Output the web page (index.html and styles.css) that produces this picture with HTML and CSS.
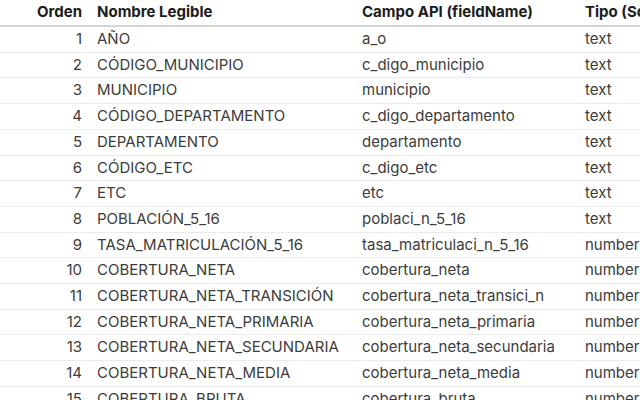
FILE: index.html
```html
<!DOCTYPE html>
<html lang="es">
<head>
<meta charset="utf-8">
<title>Campos</title>
<link rel="stylesheet" href="styles.css">
</head>
<body>
<table class="fields">
  <colgroup>
    <col class="c-order">
    <col class="c-name">
    <col class="c-api">
    <col class="c-type">
  </colgroup>
  <thead>
    <tr><th class="num">Orden</th><th>Nombre Legible</th><th>Campo API (fieldName)</th><th>Tipo (Socrata)</th></tr>
  </thead>
  <tbody>
    <tr><td class="num">1</td><td>AÑO</td><td>a_o</td><td>text</td></tr>
    <tr><td class="num">2</td><td>CÓDIGO_MUNICIPIO</td><td>c_digo_municipio</td><td>text</td></tr>
    <tr><td class="num">3</td><td>MUNICIPIO</td><td>municipio</td><td>text</td></tr>
    <tr><td class="num">4</td><td>CÓDIGO_DEPARTAMENTO</td><td>c_digo_departamento</td><td>text</td></tr>
    <tr><td class="num">5</td><td>DEPARTAMENTO</td><td>departamento</td><td>text</td></tr>
    <tr><td class="num">6</td><td>CÓDIGO_ETC</td><td>c_digo_etc</td><td>text</td></tr>
    <tr><td class="num">7</td><td>ETC</td><td>etc</td><td>text</td></tr>
    <tr><td class="num">8</td><td>POBLACIÓN_5_16</td><td>poblaci_n_5_16</td><td>text</td></tr>
    <tr><td class="num">9</td><td>TASA_MATRICULACIÓN_5_16</td><td>tasa_matriculaci_n_5_16</td><td>number</td></tr>
    <tr><td class="num">10</td><td>COBERTURA_NETA</td><td>cobertura_neta</td><td>number</td></tr>
    <tr><td class="num">11</td><td>COBERTURA_NETA_TRANSICIÓN</td><td>cobertura_neta_transici_n</td><td>number</td></tr>
    <tr><td class="num">12</td><td>COBERTURA_NETA_PRIMARIA</td><td>cobertura_neta_primaria</td><td>number</td></tr>
    <tr><td class="num">13</td><td>COBERTURA_NETA_SECUNDARIA</td><td>cobertura_neta_secundaria</td><td>number</td></tr>
    <tr><td class="num">14</td><td>COBERTURA_NETA_MEDIA</td><td>cobertura_neta_media</td><td>number</td></tr>
    <tr><td class="num">15</td><td>COBERTURA_BRUTA</td><td>cobertura_bruta</td><td>number</td></tr>
  </tbody>
</table>
</body>
</html>
```
FILE: styles.css
```css
html, body {
  margin: 0;
  padding: 0;
  background: #ffffff;
  overflow: hidden;
}
body {
  font-family: Inter, "Noto Sans", sans-serif;
  font-size: 15px;
  color: #3c3c3c;
}
.fields {
  border-collapse: collapse;
  table-layout: fixed;
  width: 720px;
}
.c-order { width: 89px; }
.c-name { width: 265px; }
.c-api { width: 223px; }
.c-type { width: 143px; }
.fields th {
  text-align: left;
  font-weight: 700;
  color: #1c1c1c;
  padding: 3px 8px 5px;
  line-height: 17px;
  border-bottom: 2px solid #d4d4d4;
  white-space: nowrap;
}
.fields td {
  padding: 4px 8px;
  line-height: 16.7px;
  border-bottom: 1px solid #ececec;
  white-space: nowrap;
}
.fields .num {
  text-align: right;
  padding-right: 7px;
}
```
